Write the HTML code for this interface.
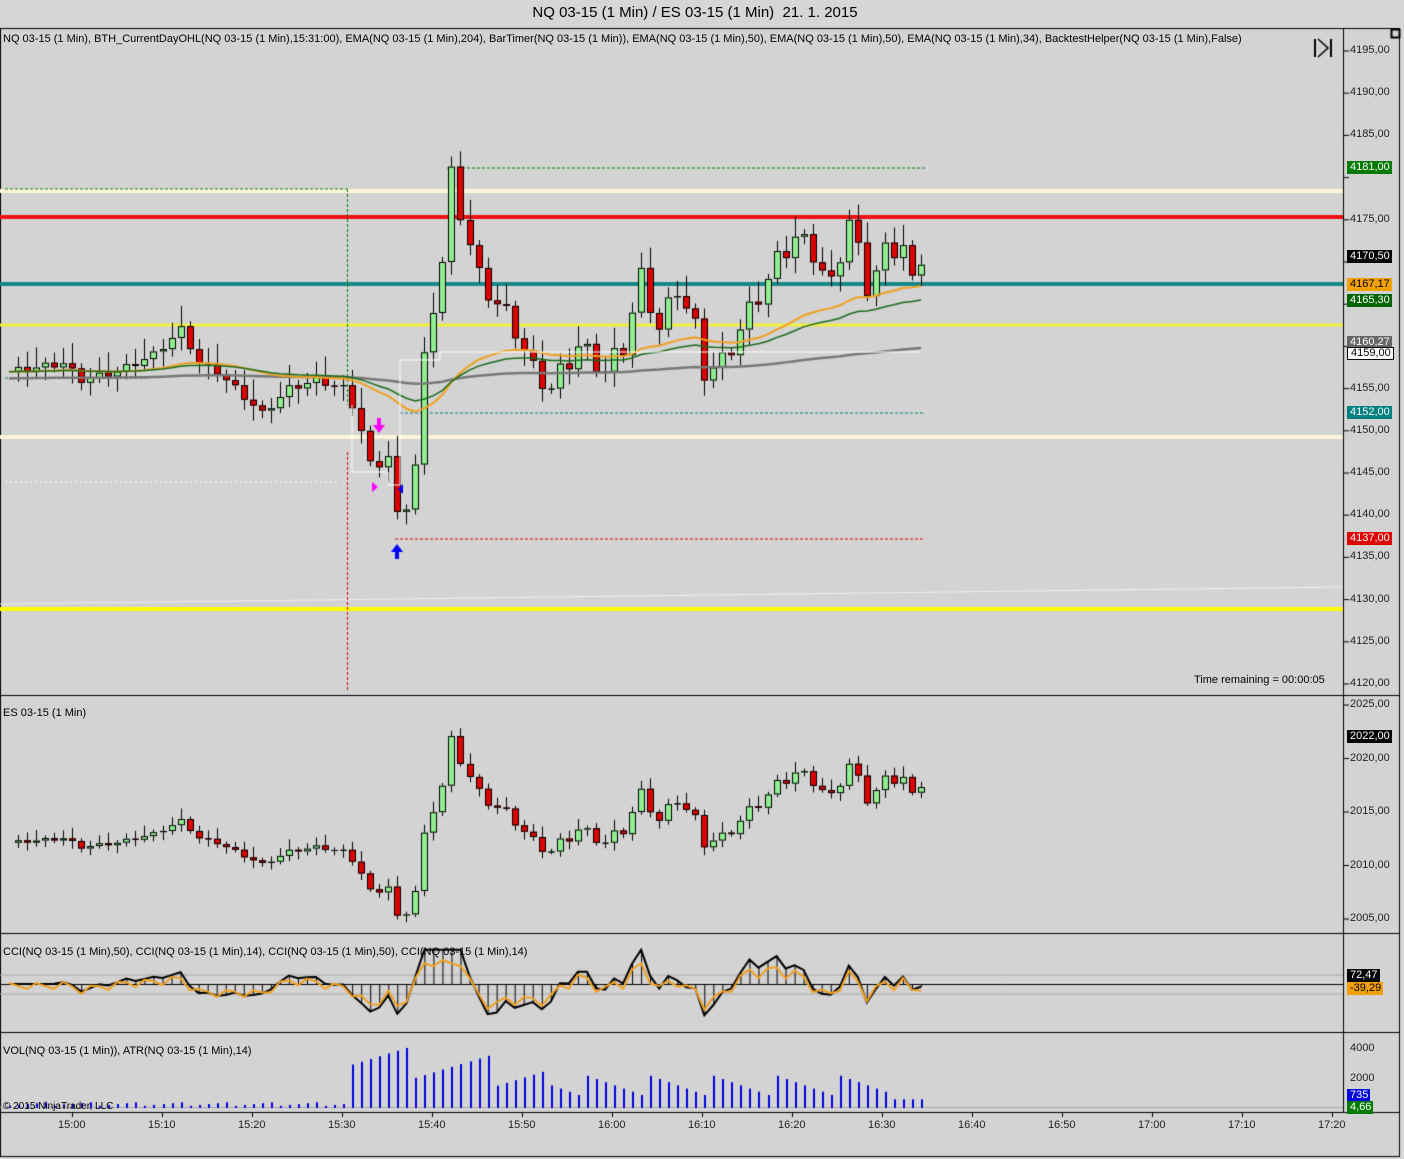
<!DOCTYPE html><html><head><meta charset="utf-8"><style>
body{margin:0;width:1404px;height:1159px;background:#d6d6d6;overflow:hidden;font-family:"Liberation Sans",sans-serif;position:relative}
#t{position:absolute;top:4px;left:0;width:1390px;text-align:center;font-size:15px;color:#000}
.l{position:absolute;font-size:11px;color:#000;white-space:nowrap}
.ax{position:absolute;font-size:11px;color:#222;left:1350px}
.tg{position:absolute;left:1347px;font-size:11px;padding:0 2px 0 3px;line-height:13px;color:#fff}
.tm{position:absolute;top:1119px;font-size:11px;color:#222}
canvas{position:absolute;left:0;top:0}
</style></head><body>
<div id="t">NQ 03-15 (1 Min) / ES 03-15 (1 Min)&nbsp; 21. 1. 2015</div>
<canvas id="c" width="1404" height="1159"></canvas>
<div class="l" style="left:3px;top:33px">NQ 03-15 (1 Min), BTH_CurrentDayOHL(NQ 03-15 (1 Min),15:31:00), EMA(NQ 03-15 (1 Min),204), BarTimer(NQ 03-15 (1 Min)), EMA(NQ 03-15 (1 Min),50), EMA(NQ 03-15 (1 Min),50), EMA(NQ 03-15 (1 Min),34), BacktestHelper(NQ 03-15 (1 Min),False)</div>
<div class="l" style="left:1194px;top:674px">Time remaining = 00:00:05</div>
<div class="l" style="left:3px;top:707px">ES 03-15 (1 Min)</div>
<div class="l" style="left:3px;top:946px">CCI(NQ 03-15 (1 Min),50), CCI(NQ 03-15 (1 Min),14), CCI(NQ 03-15 (1 Min),50), CCI(NQ 03-15 (1 Min),14)</div>
<div class="l" style="left:3px;top:1045px">VOL(NQ 03-15 (1 Min)), ATR(NQ 03-15 (1 Min),14)</div>
<div class="l" style="left:3px;top:1101px;font-size:10px">© 2015 NinjaTrader, LLC</div>
<div id="ax"></div>
<div class="tg" style="top:161px;background:#007a00">4181,00</div>
<div class="tg" style="top:250px;background:#000">4170,50</div>
<div class="tg" style="top:278px;background:#f0a000;color:#000">4167,17</div>
<div class="tg" style="top:294px;background:#006400">4165,30</div>
<div class="tg" style="top:336px;background:#666">4160,27</div>
<div class="tg" style="top:347px;background:#fff;color:#000;border:1px solid #000;line-height:11px">4159,00</div>
<div class="tg" style="top:406px;background:#008080">4152,00</div>
<div class="tg" style="top:532px;background:#e00000">4137,00</div>
<div class="tg" style="top:730px;background:#000">2022,00</div>
<div class="tg" style="top:969px;background:#000">72,47</div>
<div class="tg" style="top:982px;background:#f0a000;color:#000">-39,29</div>
<div class="tg" style="top:1089px;background:#0000e0">735</div>
<div class="tg" style="top:1101px;background:#007a00">4,66</div>
<script>
var ax=document.getElementById('ax'),h='';
for(var p=4195;p>=4120;p-=5){var y=51+(4195-p)*8.44;if([4180,4170,4160,4165].indexOf(p)<0||p==4175)h+='<div class="ax" style="top:'+(y-7)+'px">'+p+',00</div>';}
for(var p=2025;p>=2005;p-=5){var y=705+(2025-p)*10.7;h+='<div class="ax" style="top:'+(y-7)+'px">'+p+',00</div>';}
h+='<div class="ax" style="top:1042px">4000</div><div class="ax" style="top:1072px">2000</div>';
var tl=['15:00','15:10','15:20','15:30','15:40','15:50','16:00','16:10','16:20','16:30','16:40','16:50','17:00','17:10','17:20'];
tl.forEach(function(s,i){h+='<div class="tm" style="left:'+(58+i*90)+'px">'+s+'</div>'});
ax.innerHTML=h;
var c=document.getElementById('c').getContext('2d');
c.fillStyle='#d3d3d3';c.fillRect(1,28,1399,1129);
function L(x1,y1,x2,y2,col,w,d){c.beginPath();c.strokeStyle=col;c.lineWidth=w||1;c.setLineDash(d||[]);c.moveTo(x1,y1);c.lineTo(x2,y2);c.stroke();c.setLineDash([]);}
c.strokeStyle='#000';c.lineWidth=1;c.strokeRect(0.5,28.5,1399,1128);
L(1343.5,28,1343.5,1112,'#000');
[695.5,933.5,1032.5,1112.5].forEach(function(y){L(0,y,1400,y,'#000')});
for(var p=4195;p>=4120;p-=5){var y=51+(4195-p)*8.44;L(1343,y,1349,y,'#000')}
for(var p=2025;p>=2005;p-=5){var y=705+(2025-p)*10.7;L(1343,y,1349,y,'#000')}
for(var i=0;i<15;i++){L(72+i*90+.5,1112,72+i*90+.5,1117,'#000')}
L(0,604,1343,587,'#f0f0e8',1);
L(0,191,1343,191,'#fff5dc',4);L(0,437,1343,437,'#fff5dc',4);
L(0,217,1343,217,'#ee1111',4);L(0,284,1343,284,'#168888',4);
L(0,325,1343,325,'#f0f040',3);L(0,609,1343,609,'#ffff00',4);
L(5,482,340,482,'#fff',1,[2,3]);
L(5,189,347,189,'#008000',1,[3,2]);L(347.5,189,347.5,405,'#008000',1,[3,2]);
L(347.5,452,347.5,690,'#e00000',1,[3,2]);
L(447,168,925,168,'#008000',1,[3,2]);L(395,539,925,539,'#e00000',1,[3,2]);
L(400,413,925,413,'#008080',1,[3,2]);L(5,378,150,378,'#008080',1,[3,2]);
var keys=[[0,4157],[6,4158],[8,4156],[12,4157],[16,4159],[19,4162],[21,4158],[23,4157],[25,4155],[28,4152],[31,4155],[34,4156],[37,4155],[38,4153],[39,4150],[40,4146],[41,4146],[42,4147],[43,4140],[44,4141],[45,4146],[46,4158],[47,4165],[48,4170],[49,4180],[50,4176],[51,4172],[52,4168],[54,4165],[56,4162],[58,4157],[60,4155],[63,4160],[66,4157],[68,4160],[70,4168],[72,4162],[74,4167],[76,4162],[77,4157],[79,4158],[82,4164],[85,4170],[87,4173],[89,4171],[91,4167],[93,4175],[95,4167],[97,4171],[99,4172],[100,4168],[101,4170]];
var cl=[];for(var i=0;i<=101;i++){for(var k=0;k<keys.length-1;k++){if(i>=keys[k][0]&&i<=keys[k+1][0]){var a=keys[k],b=keys[k+1];var t=(i-a[0])/(b[0]-a[0]||1);cl[i]=a[1]+(b[1]-a[1])*t+(i%3==1?1:i%3==2?-0.8:0)*(i>45&&i<100?1.3:0.4);break;}}}
function Y(p){return 51+(4195-p)*8.44}
function EY(y){return 742+(y-178)*0.52}
function X(i){return 9+i*9.03}
function candles(f,wk){for(var i=1;i<=101;i++){var o=cl[i-1],cc=cl[i],x=Math.round(X(i));var hi=Math.max(o,cc)+wk*(1+(i%4)),lo=Math.min(o,cc)-wk*(1+(i*7%5)/2);
L(x+.5,f(Y(hi)),x+.5,f(Y(lo)),'#000');var y1=f(Y(Math.max(o,cc))),y2=f(Y(Math.min(o,cc)));if(y2-y1<1)y2=y1+1;
c.fillStyle=cc>=o?'#90ee90':'#dd0000';c.fillRect(x-3,y1,7,y2-y1);c.strokeStyle='#000';c.strokeRect(x-2.5,y1+.5,6,y2-y1-1);}}
candles(function(y){return y},0.6);
candles(function(y){return EY(y)},0.6);
function ema(n,seed,col,w,from){var e=seed;c.beginPath();c.strokeStyle=col;c.lineWidth=w;for(var i=0;i<=101;i++){e=e+(cl[i]-e)*2/(n+1);if(i>=from){var x=X(i),y=Y(e);i==from?c.moveTo(x,y):c.lineTo(x,y)}}c.stroke();}
ema(204,4156.2,'#777',2.5,0);ema(34,4157,'#f0a020',2,0);ema(50,4157,'#1a6a1a',1.5,0);
c.strokeStyle='#fff';c.lineWidth=1;c.beginPath();c.moveTo(352,405);c.lineTo(352,472);c.lineTo(388,472);c.lineTo(388,485);c.lineTo(400,485);c.lineTo(400,360);c.lineTo(440,360);c.lineTo(440,352);c.lineTo(920,352);c.stroke();
c.fillStyle='#ff00ff';c.fillRect(377,418,4,8);c.beginPath();c.moveTo(373,425);c.lineTo(385,425);c.lineTo(379,433);c.fill();
c.fillStyle='#0000ff';c.fillRect(395,551,4,8);c.beginPath();c.moveTo(391,552);c.lineTo(403,552);c.lineTo(397,544);c.fill();
c.beginPath();c.moveTo(398,489);c.lineTo(403,484);c.lineTo(403,494);c.fill();
c.fillStyle='#ff00ff';c.beginPath();c.moveTo(378,487);c.lineTo(372,482);c.lineTo(372,492);c.fill();
L(0,975,1343,975,'#aaa');L(0,994,1343,994,'#aaa');L(0,984.5,1343,984.5,'#000');
var cci=[];for(var i=0;i<=101;i++){var d=cl[i]-(i>=5?cl.slice(i-5,i+1).reduce(function(a,b){return a+b})/6:cl[i]);cci[i]=Math.max(-40,Math.min(38,d*5));}
for(var i=0;i<=101;i++){L(X(i)+.5,984,X(i)+.5,984-cci[i]*0.9,'#000')}
c.beginPath();c.strokeStyle='#000';c.lineWidth=2;for(var i=0;i<=101;i++){var y=984-cci[i]*0.9;i?c.lineTo(X(i),y):c.moveTo(X(i),y)}c.stroke();
c.beginPath();c.strokeStyle='#f0a020';c.lineWidth=2;for(var i=0;i<=101;i++){var y=986-cci[i]*0.6+(i%3-1)*3;i?c.lineTo(X(i),y):c.moveTo(X(i),y)}c.stroke();
L(0,1107.5,1343,1107.5,'#aaa');
for(var i=0;i<=101;i++){var v=i<38?150+(i%5)*60:i<60?2500+((i*37)%9)*250-(i-38)*60:900+((i*13)%7)*220;if(i>=98)v=600;var x=Math.round(X(i));c.fillStyle='#0000e0';c.fillRect(x,1108-v*0.0145,2,v*0.0145);}
L(1315,39,1315,57,'#000',2);c.beginPath();c.strokeStyle='#000';c.lineWidth=1.5;c.moveTo(1318,39);c.lineTo(1328,48);c.lineTo(1318,57);c.stroke();L(1331,39,1331,57,'#000',2);
c.strokeRect(1391.5,29.5,8,8);
</script></body></html>
